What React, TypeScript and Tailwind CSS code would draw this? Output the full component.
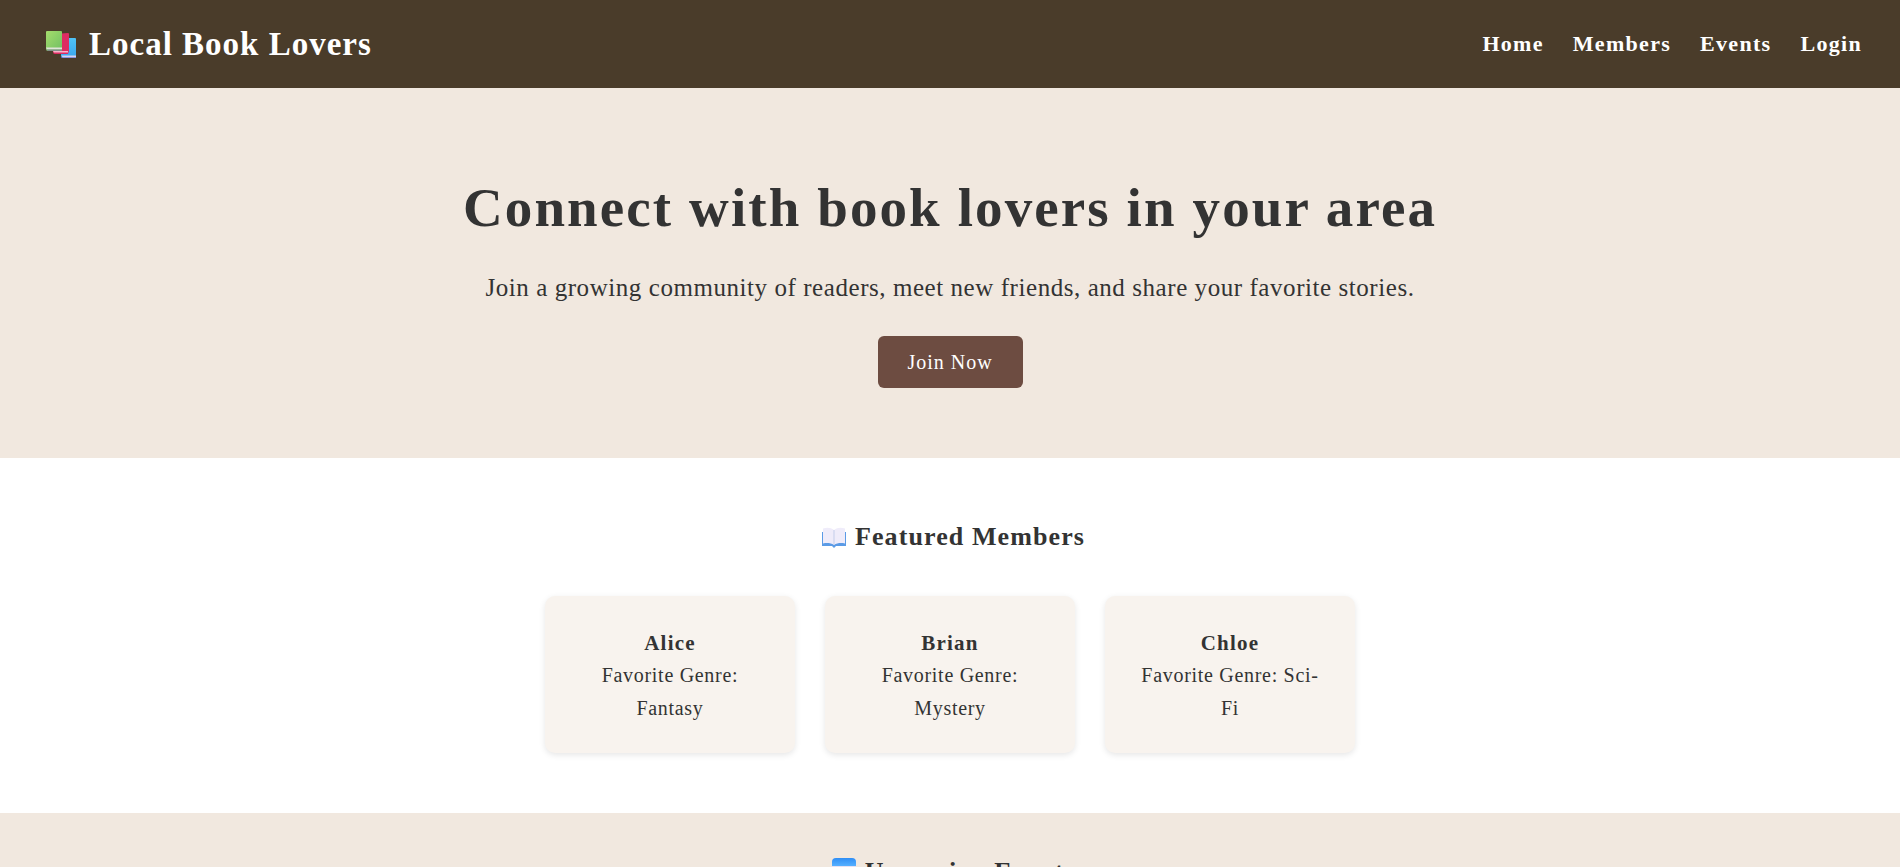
const serif = "font-['Liberation_Serif',serif]";

function BooksIcon() {
  return (
    <svg width="30" height="27" viewBox="0 0 30 27" className="shrink-0">
      <defs>
        <linearGradient id="bookGreen" x1="0" y1="0" x2="1" y2="1">
          <stop offset="0" stopColor="#a5dc6c" />
          <stop offset="1" stopColor="#6fbf62" />
        </linearGradient>
        <linearGradient id="bookBlue" x1="0" y1="0" x2="0" y2="1">
          <stop offset="0" stopColor="#4fc3f7" />
          <stop offset="1" stopColor="#3aa6ee" />
        </linearGradient>
      </defs>
      <path d="M15 7h14a1 1 0 0 1 1 1v19H17a2 2 0 0 1-2-2z" fill="url(#bookBlue)" />
      <path d="M15.500 24.500H30V27H17z" fill="#d5d3f2" />
      <path d="M15 26.300H30V27H16z" fill="#6f7fd8" />
      <path d="M8 3l14-1a1 1 0 0 1 1 1v17L22 23H9a2 2 0 0 1-2-2V4z" fill="#dd2c62" />
      <path d="M7 20h15v1.500H8z" fill="#f6b6cc" />
      <path d="M1 0h14a1 1 0 0 1 1 1v19H2a2 2 0 0 1-2-2V1a1 1 0 0 1 1-1z" fill="url(#bookGreen)" />
      <path d="M0 16.500h16V18.500H1z" fill="#dfe4d8" />
      <path d="M0 18.500h16V20H2z" fill="#7f8f8a" />
    </svg>
  );
}

function OpenBookIcon() {
  return (
    <svg width="24" height="21" viewBox="0 0 24 21" className="shrink-0">
      <path d="M0 5h24v14H14l-2 2-2-2H0z" fill="#5b9be6" />
      <path d="M1 1.500c4-1.500 8-1 11 1.500v15c-3-2-7-2.500-11-1.500z" fill="#efecfa" />
      <path d="M23 1.500c-4-1.500-8-1-11 1.500v15c3-2 7-2.500 11-1.500z" fill="#efecfa" />
      <path d="M12 3v15" stroke="#c3cdea" strokeWidth="1" />
    </svg>
  );
}

function CalendarIcon() {
  return (
    <svg width="24" height="24" viewBox="0 0 24 24" className="mb-[4px] shrink-0">
      <defs>
        <linearGradient id="calTop" x1="0" y1="0" x2="0" y2="1">
          <stop offset="0" stopColor="#2f8ef5" />
          <stop offset="1" stopColor="#55b0ff" />
        </linearGradient>
      </defs>
      <rect x="0" y="0" width="24" height="24" rx="4" fill="#e4e1f2" />
      <path d="M0 8V4a4 4 0 0 1 4-4h16a4 4 0 0 1 4 4v4z" fill="url(#calTop)" />
    </svg>
  );
}

const members = [
  { name: "Alice", genre: "Fantasy" },
  { name: "Brian", genre: "Mystery" },
  { name: "Chloe", genre: "Sci-Fi" },
];

export default function App() {
  return (
    <div className={`${serif} h-screen overflow-hidden bg-white text-[20px] leading-[32.4px] tracking-[0.7px] text-[#333]`}>
      <header className="flex h-[88px] items-center justify-between bg-[#4a3c2a] pl-[46px] pr-[38px] text-white">
        <div className="flex items-center gap-[13px]">
          <BooksIcon />
          <span className="text-[33px] font-bold tracking-[1px]">Local Book Lovers</span>
        </div>
        <nav className="flex gap-[29px] text-[22px] font-bold tracking-[1.3px]">
          <a>Home</a>
          <a>Members</a>
          <a>Events</a>
          <a>Login</a>
        </nav>
      </header>

      <section className="flex h-[370px] flex-col items-center bg-[#f1e8df] pt-[88px]">
        <h1 className="text-[55px] leading-[64px] font-bold tracking-[2.1px]">Connect with book lovers in your area</h1>
        <p className="mt-[30px] text-[25px] leading-[36px] tracking-[0.56px]">
          Join a growing community of readers, meet new friends, and share your favorite stories.
        </p>
        <button className="mt-[30px] h-[52px] w-[145px] rounded-[6px] bg-[#6d4c41] text-[20px] tracking-[1px] text-white">
          Join Now
        </button>
      </section>

      <section className="flex h-[355px] flex-col items-center pt-[60px]">
        <h2 className="flex items-center gap-[9px] pl-[7px] text-[26px] leading-[38px] font-bold tracking-[1.1px]">
          <OpenBookIcon />
          Featured Members
        </h2>
        <div className="mt-[40px] flex gap-[30px]">
          {members.map((m) => (
            <div
              key={m.name}
              className="w-[250px] rounded-[10px] bg-[#f8f3ee] px-[30px] pt-[31px] pb-[29px] text-center shadow-[0_2px_6px_rgba(0,0,0,0.1)]"
            >
              <div className="text-[21px] font-bold tracking-[1.2px]">{m.name}</div>
              <div>Favorite Genre: {m.genre}</div>
            </div>
          ))}
        </div>
      </section>

      <section className="flex flex-col items-center bg-[#f1e8df] pt-[40px]">
        <h2 className="flex items-center gap-[9px] pl-[7px] text-[26px] leading-[38px] font-bold tracking-[1px]">
          <CalendarIcon />
          Upcoming Events
        </h2>
      </section>
    </div>
  );
}
